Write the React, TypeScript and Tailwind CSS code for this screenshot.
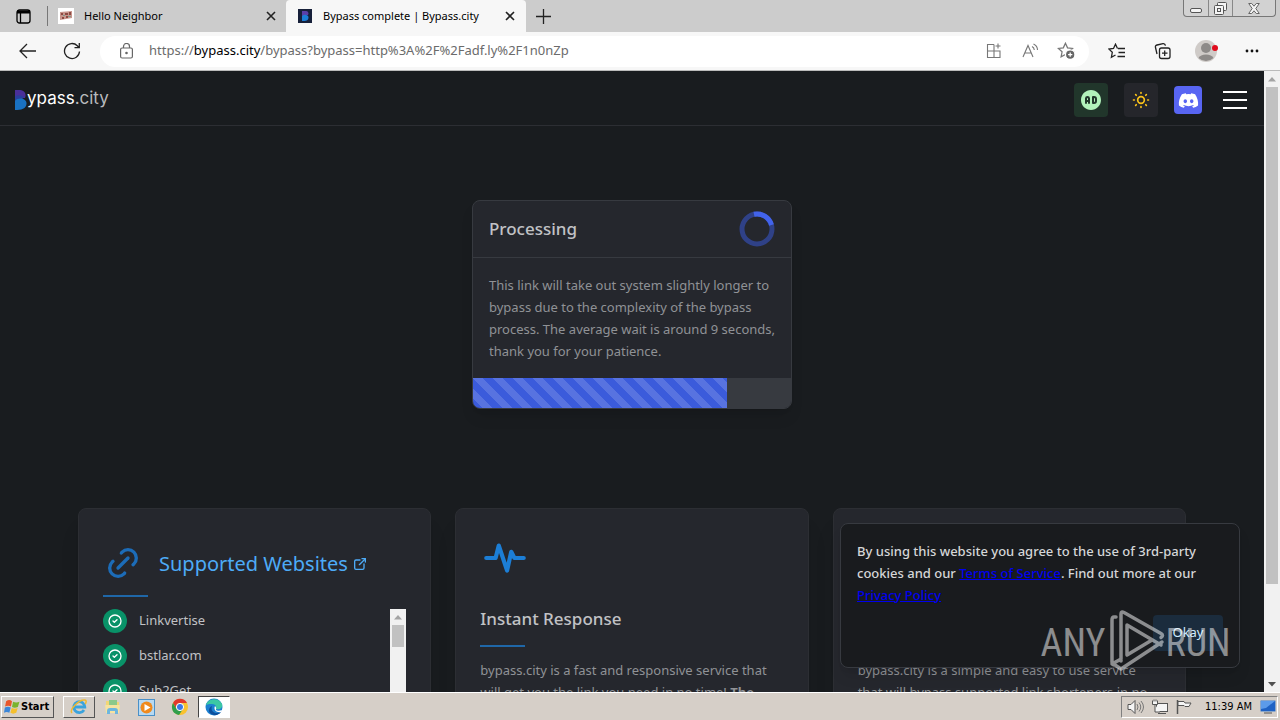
import type { ReactNode } from 'react';
import {
  TbActivityHeartbeat, TbAdCircleFilled, TbCircleCheck, TbExternalLink, TbLink, TbSun,
} from 'react-icons/tb';
import { FaDiscord } from 'react-icons/fa';

const SITES = ['Linkvertise', 'bstlar.com', 'Sub2Get', 'Boost.ink'];

function TabClose({ label }: { label: string }) {
  return (
    <button aria-label={label} className="flex size-4 shrink-0 items-center justify-center">
      <svg width="10" height="10" viewBox="0 0 10 10" stroke="#222" strokeWidth="1.6">
        <path d="M1 1l8 8M9 1l-8 8" />
      </svg>
    </button>
  );
}

function TabStrip() {
  return (
    <div className="flex h-8 shrink-0 bg-[#cccccc] text-[11px] text-black">
      <div className="flex w-[48px] items-center justify-end">
        <button aria-label="Tab actions" className="mr-4">
          <svg width="15" height="15" viewBox="0 0 15 15" fill="none" stroke="#000" strokeWidth="1.3">
            <rect x="1" y="1" width="13" height="13" rx="2.5" />
            <path d="M1 3h13" strokeWidth="3" />
            <path d="M4.5 4v10" />
          </svg>
        </button>
        <span className="h-5 w-px bg-[#777]" />
      </div>
      <div className="flex w-[238px] items-center pr-[7px] pl-[10px]">
        <svg width="16" height="16" viewBox="0 0 16 16" className="mr-[10px]">
          <rect width="16" height="16" fill="#fff" />
          <path d="M2 4l12-1v7l-12 2z" fill="#c9958c" />
          <path d="M3 5h2v2H3zM7 5h3v2H7zM11 4h2v3h-2zM4 9h2v2H4zM8 8h2v2H8z" fill="#8c4a42" />
          <path d="M5 7h2v1H5zM10 8h3v1h-3z" fill="#7a9a8c" />
        </svg>
        <span className="flex-1">Hello Neighbor</span>
        <TabClose label="Close Hello Neighbor" />
      </div>
      <div className="flex w-[240px] items-center rounded-t bg-[#f7f7f7] pr-2 pl-3">
        <svg width="14" height="14" viewBox="0 0 14 14" className="mr-[11px]">
          <rect width="14" height="14" fill="#17203a" />
          <path d="M4 2h4a2.500 2.500 0 0 1 2 4L4 7z" fill="#5b3fa8" />
          <path d="M4 7c2-2 6.500-1.500 6.500 1.500S8 12 4 12z" fill="#1c7ed6" />
        </svg>
        <span className="flex-1">Bypass complete | Bypass.city</span>
        <TabClose label="Close Bypass.city" />
      </div>
      <button aria-label="New tab" className="ml-[10px]">
        <svg width="15" height="15" viewBox="0 0 15 15" stroke="#222" strokeWidth="1.3">
          <path d="M7.500 0v15M0 7.500h15" />
        </svg>
      </button>
      <div className="mr-1 ml-auto flex h-[17px] w-[93px] rounded-b border border-t-0 border-[#777] bg-[#d2d2d2]">
        <button aria-label="Minimize" className="flex flex-1 items-end justify-center border-r border-[#888] pb-[3px]">
          <svg width="12" height="5" viewBox="0 0 12 5">
            <rect x=".5" y=".5" width="11" height="4" rx="1.500" fill="#f4f4f4" stroke="#555" />
          </svg>
        </button>
        <button aria-label="Restore" className="flex flex-1 items-center justify-center border-r border-[#888]">
          <svg width="13" height="13" viewBox="0 0 13 13" fill="#f4f4f4" stroke="#555">
            <rect x="3.500" y=".5" width="9" height="8" rx="1" />
            <rect x=".5" y="3.500" width="9" height="9" rx="1" />
            <rect x="3.500" y="6.500" width="3" height="3" />
          </svg>
        </button>
        <button aria-label="Close window" className="flex w-[42px] items-center justify-center">
          <svg width="12" height="11" viewBox="0 0 12 11" fill="#f4f4f4" stroke="#666">
            <path d="M.7.500h3L6 3.200 8.300.500h3L7.800 5.500l3.500 5h-3L6 7.800 3.700 10.500h-3l3.500-5z" />
          </svg>
        </button>
      </div>
    </div>
  );
}

function ToolButton({ label, children }: { label: string; children: ReactNode }) {
  return (
    <button aria-label={label} className="flex size-6 items-center justify-center">
      {children}
    </button>
  );
}

const STAR = 'M8 1.200l2 4.300 4.700.6-3.500 3.200.9 4.700L8 11.700 3.900 14l.9-4.700L1.300 6.100 6 5.500z';

function Toolbar() {
  return (
    <div className="flex h-[39px] shrink-0 items-center border-b border-[#bbb] bg-[#f7f7f7] px-4">
      <ToolButton label="Back">
        <svg width="18" height="16" viewBox="0 0 18 16" fill="none" stroke="#222" strokeWidth="1.300">
          <path d="M8 1L1 8l7 7M1 8h16" />
        </svg>
      </ToolButton>
      <div className="mr-4 ml-5">
        <ToolButton label="Refresh">
          <svg width="18" height="18" viewBox="0 0 18 18" fill="none" stroke="#222" strokeWidth="1.300">
            <path d="M16.500 9.500A7.500 7.500 0 1 1 14.300 3.700L16 5.500M16.300 1v4.700h-4.800" />
          </svg>
        </ToolButton>
      </div>
      <div className="flex h-[31px] flex-1 items-center rounded-full bg-white pr-[11px] pl-5">
        <svg width="13" height="16" viewBox="0 0 13 16" fill="none" stroke="#666" strokeWidth="1.200">
          <rect x=".6" y="5" width="11.800" height="10" rx="1.500" />
          <path d="M3.500 5V3.500a3 3 0 0 1 6 0V5" />
          <circle cx="6.500" cy="10" r=".7" fill="#666" />
        </svg>
        <div className="ml-4 flex-1 text-[13px] text-[#6b6b6b]">
          https://<span className="text-black">bypass.city</span>/bypass?bypass=http%3A%2F%2Fadf.ly%2F1n0nZp
        </div>
        <div className="flex gap-3">
          <ToolButton label="Apps">
            <svg width="16" height="16" viewBox="0 0 16 16" fill="none" stroke="#777" strokeWidth="1.100">
              <path d="M8 1.500H1.500v13h12.500V8H1.500M8 1.500v13M12 .5v5M9.500 3h5" />
            </svg>
          </ToolButton>
          <ToolButton label="Read aloud">
            <svg width="17" height="16" viewBox="0 0 17 16" fill="none" stroke="#777" strokeWidth="1.100">
              <path d="M1 14L6 2.500 11 14M3 10h6.500M10 3.500c1.500.7 2.200 2 2.300 3.500M11.500 1c2.700 1.200 4 3.200 4 6" />
            </svg>
          </ToolButton>
          <ToolButton label="Add to favorites">
            <svg width="19" height="18" viewBox="0 0 18 17" fill="none" stroke="#777" strokeWidth="1.200">
              <path d={STAR} />
              <circle cx="12.500" cy="12" r="4.500" fill="#666" stroke="#fff" />
              <path d="M12.500 10v4M10.500 12h4" stroke="#fff" />
            </svg>
          </ToolButton>
        </div>
      </div>
      <div className="ml-4 flex items-center gap-[21px]">
        <ToolButton label="Favorites">
          <svg width="18" height="16" viewBox="0 0 18 16" fill="none" stroke="#222" strokeWidth="1.300">
            <path d="M9.500 5.500L7.500 1.200l-2 4.300-4.500.6 3.300 3.200-.9 5L7.500 12M10 5.500h7M10.500 9.500H17M9.500 13.500H17" />
          </svg>
        </ToolButton>
        <ToolButton label="Collections">
          <svg width="17" height="17" viewBox="0 0 17 17" fill="none" stroke="#222" strokeWidth="1.300">
            <rect x="5.500" y="5" width="10.500" height="10.500" rx="2" />
            <path d="M10.700 7.500v5.500M8 10.200h5.500M3 11L1.500 4.500Q1 2.500 3 2l6-1.300q2-.3 2.500 2" />
          </svg>
        </ToolButton>
        <ToolButton label="Profile">
          <svg width="24" height="24" viewBox="0 0 24 24">
            <circle cx="11" cy="12" r="11" fill="#cfcbc8" />
            <circle cx="11" cy="9" r="5" fill="#8d8a88" />
            <path d="M3.500 19a8 5.500 0 0 1 15 0 11 11 0 0 1-15 0z" fill="#8d8a88" />
            <circle cx="20" cy="9" r="3" fill="#e00b1c" />
          </svg>
        </ToolButton>
        <ToolButton label="Settings and more">
          <svg width="14" height="4" viewBox="0 0 14 4" fill="#111">
            <circle cx="2" cy="2" r="1.400" />
            <circle cx="7" cy="2" r="1.400" />
            <circle cx="12" cy="2" r="1.400" />
          </svg>
        </ToolButton>
      </div>
    </div>
  );
}

function SiteHeader() {
  return (
    <header className="flex h-[55px] items-center border-b border-[#2c2e33] pt-1 pr-[15px] pl-[14px]">
      <a href="#home" className="flex items-center font-[Inter,sans-serif] text-lg text-white">
        <svg width="13" height="20" viewBox="0 0 13 20">
          <path d="M1 0h5a5.500 5.500 0 0 1 5 8L1 9z" fill="#4a2f9a" />
          <path d="M1 6q5-2 9 1l-4 4H1z" fill="#2a3f9e" />
          <path d="M1 11c3-4 11.500-3 11.500 2.500S7 20 1 20z" fill="#1971c2" />
        </svg>
        <span className="pb-1 text-[17px]">ypass<span className="text-[#b8babd]">.city</span></span>
      </a>
      <div className="ml-auto flex items-center">
        <button aria-label="Ads" className="flex size-[34px] items-center justify-center rounded bg-[#21362b] text-[#b2f2bb]">
          <TbAdCircleFilled size={24} />
        </button>
        <button aria-label="Toggle theme" className="ml-4 flex size-[34px] items-center justify-center rounded bg-[#25262b] text-[#fcc419]">
          <TbSun size={20} />
        </button>
        <a href="#discord" aria-label="Discord" className="ml-4 flex size-7 items-center justify-center rounded-sm bg-[#5865f2] text-white">
          <FaDiscord size={21} />
        </a>
        <button aria-label="Menu" className="ml-[19px] flex w-7 flex-col items-center gap-[6px]">
          <span className="h-[2px] w-6 bg-white" />
          <span className="h-[2px] w-6 bg-white" />
          <span className="h-[2px] w-6 bg-white" />
        </button>
      </div>
    </header>
  );
}

function ProcessingCard() {
  const progress = 80;
  return (
    <section className="mx-auto mt-[74px] w-80 overflow-hidden rounded-lg border border-[#373a40] bg-[#25272d] shadow-lg">
      <div className="flex h-[57px] items-center justify-between border-b border-[#373a40] px-4">
        <h1 className="text-[17px] font-medium text-[#c1c2c5]">Processing</h1>
        <svg width="36" height="36" viewBox="0 0 36 36" fill="none" strokeWidth="5">
          <circle cx="18" cy="18" r="15" stroke="#2f4187" />
          <path d="M15 3.300A15 15 0 0 1 32.500 14" stroke="#4263eb" />
        </svg>
      </div>
      <p className="py-4 pr-3 pl-4 text-[13px] leading-[22px] text-[#909296]">
        This link will take out system slightly longer to bypass due to the complexity of the bypass
        process. The average wait is around 9 seconds, thank you for your patience.
      </p>
      <div role="progressbar" aria-label="Bypass progress" aria-valuenow={progress} className="h-[30px] bg-[#373a40]">
        <div
          className="h-full bg-[#3b5bdb] bg-[linear-gradient(45deg,rgba(255,255,255,0.15)_25%,transparent_25%,transparent_50%,rgba(255,255,255,0.15)_50%,rgba(255,255,255,0.15)_75%,transparent_75%)] bg-[size:20px_20px]"
          style={{ width: `${progress}%` }}
        />
      </div>
    </section>
  );
}

function FeatureCard({ children }: { children: ReactNode }) {
  return (
    <section className="h-[420px] rounded-lg border border-[#2c2e33] bg-[#25272d] p-6 shadow-xl">
      {children}
    </section>
  );
}

function Features() {
  return (
    <div className="mt-[99px] grid grid-cols-3 gap-6 px-[78px]">
      <FeatureCard>
        <div className="flex items-center gap-4 pt-[10px]">
          <TbLink size={40} className="text-[#1c6cb8]" />
          <a href="#supported" className="flex items-center gap-1 pt-px text-xl text-[#4dabf7]">
            Supported Websites <TbExternalLink size={16} />
          </a>
        </div>
        <div className="mt-3 h-[2px] w-[45px] bg-[#1f67a8]" />
        <div className="mt-3 flex h-[260px] overflow-hidden">
          <ul className="flex flex-1 flex-col gap-[11px] text-[13px] text-[#c1c2c5]">
            {SITES.map((site) => (
              <li key={site} className="flex h-6 items-center gap-3">
                <span className="flex size-6 items-center justify-center rounded-full bg-[#099268] text-white">
                  <TbCircleCheck size={16} />
                </span>
                {site}
              </li>
            ))}
          </ul>
          <div className="flex w-4 flex-col items-center bg-[#f1f1f1]">
            <ScrollArrow />
            <div className="h-[22px] w-3 bg-[#c1c1c1]" />
          </div>
        </div>
      </FeatureCard>
      <FeatureCard>
        <TbActivityHeartbeat size={50} className="text-[#1c7ed6]" />
        <FeatureText title="Instant Response">
          bypass.city is a fast and responsive service that will get you the link you need in no time!{' '}
          <b>The fastest bypass around.</b>
        </FeatureText>
      </FeatureCard>
      <FeatureCard>
        <div className="size-[50px]" />
        <FeatureText title="Easy to Use">
          bypass.city is a simple and easy to use service that will bypass supported link shorteners in no time.
        </FeatureText>
      </FeatureCard>
    </div>
  );
}

function FeatureText({ title, children }: { title: string; children: ReactNode }) {
  return (
    <>
      <h2 className="mt-[22px] text-[17px] leading-7 font-medium text-[#c1c2c5]">{title}</h2>
      <div className="mt-3 h-[2px] w-[45px] bg-[#1f67a8]" />
      <p className="mt-3 pr-1 text-[13px] leading-[22px] text-[#909296]">{children}</p>
    </>
  );
}

function ScrollArrow({ down = false }: { down?: boolean }) {
  return (
    <div className="flex size-4 shrink-0 items-center justify-center">
      <svg width="8" height="5" viewBox="0 0 8 5" fill={down ? '#505050' : '#a3a3a3'}>
        <path d={down ? 'M0 0h8L4 4.500z' : 'M0 4.500h8L4 0z'} />
      </svg>
    </div>
  );
}

function CookieNotice() {
  return (
    <div className="absolute right-6 bottom-6 flex w-[400px] flex-col rounded-lg border border-[#373a40] bg-[#191b1e] p-4 shadow-lg">
      <p className="pr-4 text-[13px] leading-[22px] font-medium text-[#d5d6d8]">
        By using this website you agree to the use of 3rd-party cookies and our{' '}
        <a href="#terms" className="text-[#0000ee] underline">Terms of Service</a>. Find out more at our{' '}
        <a href="#privacy" className="text-[#0000ee] underline">Privacy Policy</a>
      </p>
      <button className="mt-[9px] h-9 w-[70px] self-end rounded bg-[#1b2c3d] text-[13px] text-[#d0ebff]">
        Okay
      </button>
    </div>
  );
}

function Watermark() {
  return (
    <div className="pointer-events-none absolute right-[49px] bottom-[19px] flex items-center font-['Roboto_Condensed','Liberation_Sans_Narrow',Roboto,sans-serif] text-[38px] leading-none text-white/50">
      <span className="w-[68px] pt-1 text-center">ANY</span>
      <svg width="58" height="64" viewBox="0 0 58 64" fill="none" stroke="currentColor" strokeWidth="3.500" strokeLinejoin="round" strokeLinecap="round">
        <path d="M9 8H7q-2 0-2 3v42q0 3 3 3l6 4L55 33M14 52V5q0-3 3-1.500l37 21q3 2 0 4M20 46V16l34 20M20 46l25-15M5 55l9-5" />
      </svg>
      <span className="w-[66px] pt-1 text-center">RUN</span>
    </div>
  );
}

function EdgeIcon() {
  return (
    <svg width="18" height="18" viewBox="0 0 18 18">
      <circle cx="9" cy="9" r="8.500" fill="#1c7fd0" />
      <path d="M1 7C3 0 14-1 17 6c1 4-2 6-6 5 1-3-1-5-4-5-3 0-5 .5-6 1z" fill="#3cc7a4" />
      <path d="M7 8c-2 5 3 9 9 6-3 4-8 4-11 1-2-2-1-6 2-7z" fill="#0c4f9c" />
      <path d="M10 8c2 2 1 3 1 4 1 1 4 1 6 0l-1 2c-4 1-8-2-6-6z" fill="#fff" />
    </svg>
  );
}

function Taskbar() {
  return (
    <footer className="flex h-7 shrink-0 items-center border-t border-white bg-[#d6cfc8] pt-px pl-px font-['DejaVu_Sans_Condensed','DejaVu_Sans',sans-serif] text-black">
      <button className="flex h-[22px] w-[53px] items-center gap-px border border-t-white border-r-[#555] border-b-[#555] border-l-white pl-[2px] text-[11px] font-bold">
        <svg width="16" height="16" viewBox="0 0 15 15">
          <path d="M2 2q3-2 5.500 0L6.500 7Q4 5.500 1 7z" fill="#e8562a" />
          <path d="M8.500 2.500q3 1.500 6 0L13 7.500q-3 1.500-5.500 0z" fill="#7ab32e" />
          <path d="M.8 8q3-1.500 5.500 0L5 13q-2.500-1.500-5 0z" fill="#3b86d8" />
          <path d="M7.300 8.500q3 1.500 5.500 0L11.500 13q-3 1.500-5.500 0z" fill="#f5bf2c" />
        </svg>
        Start
      </button>
      <button aria-label="Internet Explorer" className="ml-[9px] flex h-[22px] w-8 items-center justify-center border border-t-white border-r-[#555] border-b-[#555] border-l-white">
        <svg width="18" height="18" viewBox="0 0 18 18" fill="none">
          <path d="M14 12a5.500 5.500 0 1 1 .8-3H5" stroke="#3ba3dc" strokeWidth="2.800" />
          <path d="M2 15C-1 12 9 1 15 2c2 .5 1 3 0 4" stroke="#f0b92f" strokeWidth="1.500" />
        </svg>
      </button>
      <button aria-label="Explorer" className="ml-[9px]">
        <svg width="18" height="18" viewBox="0 0 18 18">
          <path d="M2 3h6l1 1h6v9H2z" fill="#f2d675" />
          <path d="M5 2h8v5H5z" fill="#8cc98a" />
          <path d="M1 7h15l-1 8H2z" fill="#f6e3a0" />
          <path d="M3 16v-3q0-3 3-3h5q3 0 3 3v3h-3v-3H6v3z" fill="#6db6df" />
        </svg>
      </button>
      <button aria-label="Media Player" className="ml-4">
        <svg width="17" height="17" viewBox="0 0 17 17">
          <rect x=".5" y=".5" width="16" height="16" fill="#b7d9f2" stroke="#4a90c8" />
          <circle cx="8.500" cy="8.500" r="6" fill="#f08a1d" />
          <path d="M6.500 5l6 3.500-6 3.500z" fill="#fff" />
        </svg>
      </button>
      <button aria-label="Chrome" className="ml-4">
        <svg width="18" height="18" viewBox="0 0 18 18">
          <circle cx="9" cy="9" r="8" fill="#f9c22e" />
          <path d="M2 5a8 8 0 0 1 14 0H9a4 4 0 0 0-3.500 6z" fill="#e1392d" />
          <path d="M2 5a8 8 0 0 0 6 12l4-6a4 4 0 0 1-6.500 0z" fill="#2f9e4c" />
          <circle cx="9" cy="9" r="3.600" fill="#3b78e7" stroke="#fff" />
        </svg>
      </button>
      <button aria-label="Edge" className="ml-[9px] flex h-[22px] w-8 items-center justify-center border border-t-[#444] border-r-white border-b-white border-l-[#444] bg-white">
        <EdgeIcon />
      </button>
      <div className="mr-[2px] ml-auto flex h-[22px] items-center border border-t-[#808080] border-r-white border-b-white border-l-[#808080] pr-px pl-[5px] text-[11px]">
        <svg width="66" height="16" viewBox="0 0 66 16" fill="#f5f5f5" stroke="#555">
          <path d="M1 5.500h3L8 1.500v13l-4-4H1z" />
          <path d="M10 5q2 3 0 6M12 3.500q3.500 4.500 0 9M14 2q5 6 0 12" fill="none" stroke="#777" />
          <rect x="29.500" y="4.500" width="11" height="8" />
          <path d="M31 14.500h8M25.500 1.500v4h5v-4M28 5.500v7.500h5M27 .5v2M29 .5v2" />
          <path d="M50.500 1v14" strokeWidth="1.500" />
          <path d="M51 2.500h6l1 1.500h6l-2 3.500h-4l-1-1h-6z" />
        </svg>
        <time className="mr-2 ml-3">11:39 AM</time>
        <svg width="16" height="14" viewBox="0 0 16 14">
          <rect x=".5" y=".5" width="15" height="11" rx="1" fill="#1f62c4" stroke="#8ba6c8" />
          <path d="M1 1h14L6 8 1 9z" fill="#5c9bea" />
          <path d="M4 13h8" stroke="#555" />
        </svg>
      </div>
    </footer>
  );
}

export default function App() {
  return (
    <div className="relative flex h-screen flex-col overflow-hidden font-['Noto_Sans','Open_Sans',sans-serif]">
      <TabStrip />
      <Toolbar />
      <div className="flex min-h-0 flex-1">
        <main className="relative min-w-0 flex-1 overflow-hidden bg-[#191c1f]">
          <SiteHeader />
          <ProcessingCard />
          <Features />
          <CookieNotice />
        </main>
        <div className="flex w-4 shrink-0 flex-col items-center bg-[#f1f1f1]">
          <ScrollArrow />
          <div className="h-4/5 w-3 bg-[#c1c1c1]" />
          <div className="mt-auto">
            <ScrollArrow down />
          </div>
        </div>
      </div>
      <Taskbar />
      <div className="absolute right-0 bottom-7 z-10">
        <Watermark />
      </div>
    </div>
  );
}
